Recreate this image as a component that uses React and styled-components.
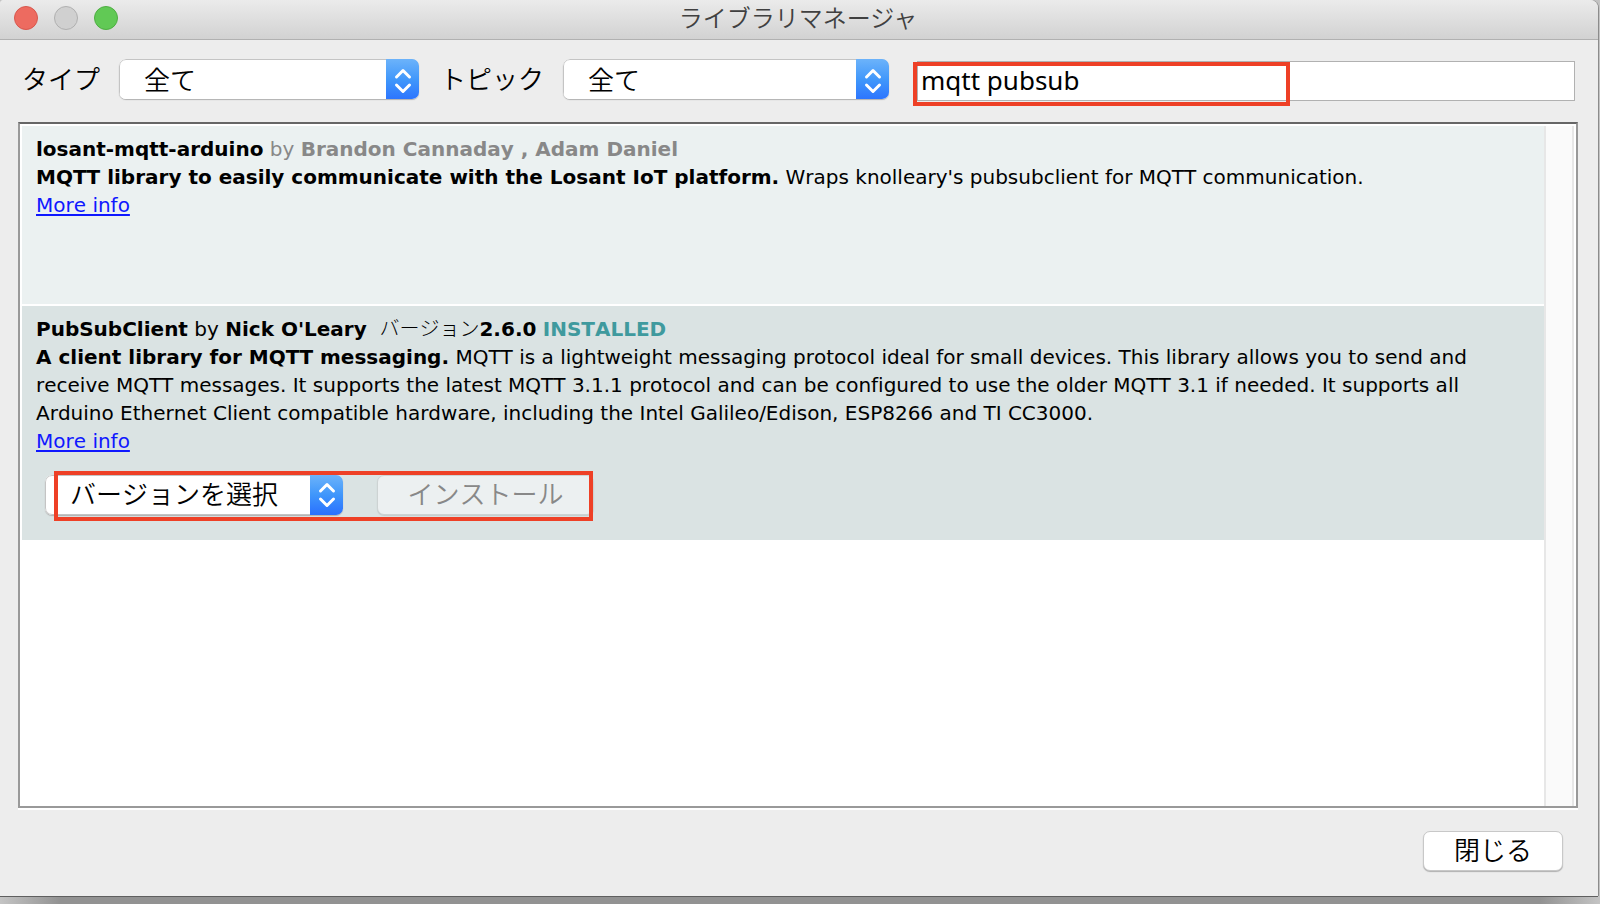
import React from 'react';
import styled, { createGlobalStyle } from 'styled-components';

const GlobalStyle = createGlobalStyle`
  *, *::before, *::after { box-sizing: border-box; }
  body { margin: 0; background: #929292; }
  button, input, select { font: inherit; color: inherit; margin: 0; }
`;

const uiFont = '"Noto Sans", "Noto Sans CJK JP", sans-serif';
const listFont = '"DejaVu Sans", "Noto Sans CJK JP", sans-serif';
const jpFont = '"Noto Sans CJK JP", sans-serif';

const Desktop = styled.div`
  display: flex;
  flex-direction: column;
  min-height: 100vh;
  padding: 0 2px 8px 0;
  background: linear-gradient(to right, #c4c4c4, #929292 60px calc(100% - 60px), #c4c4c4);
`;

const Window = styled.main`
  flex: 1;
  display: flex;
  flex-direction: column;
  background: #ededed;
  border-radius: 4px 8px 0 0;
  box-shadow: 0 1px 0 #5f5f5f, 1px 0 0 #8c8c8c;
  font-family: ${jpFont};
  font-size: 26px;
  font-weight: 350;
  color: #000;
  overflow: hidden;
`;

const TitleBar = styled.header`
  display: grid;
  grid-template-columns: 1fr auto 1fr;
  align-items: center;
  height: 40px;
  padding: 0 16px 0 14px;
  background: linear-gradient(#ebebeb, #d2d2d2);
  border-bottom: 1px solid #b1b1b1;
`;

const Lights = styled.div`
  display: flex;
  gap: 16px;
  padding-bottom: 3px;
`;

const Light = styled.button`
  width: 24px;
  height: 24px;
  padding: 0;
  border: 1px solid ${(p) => p.$edge};
  border-radius: 50%;
  background: ${(p) => p.$fill};
`;

const Title = styled.h1`
  margin: 0;
  padding-bottom: 5px;
  font-size: 24px;
  line-height: 34px;
  font-weight: 350;
  color: #404040;
`;

const Filters = styled.form`
  display: flex;
  align-items: flex-start;
  padding: 19px 23px 21px 22px;
`;

const FilterLabel = styled.label`
  width: ${(p) => p.$width}px;
  line-height: 38px;
`;

const SelectShell = styled.span`
  display: grid;
  grid-template-columns: 1fr 33px;
  width: ${(p) => p.$width}px;
  height: 40px;
  margin-right: ${(p) => p.$after}px;
  border-radius: 7px;
  overflow: hidden;
  background: #fff;
  box-shadow: 0 1px 1px #b0b0b0;
`;

const NativeSelect = styled.select`
  grid-area: 1 / 1 / 2 / 3;
  appearance: none;
  width: 100%;
  padding: 0 33px 4px ${(p) => p.$indent}px;
  border: 1px solid #c4c4c4;
  border-radius: 7px;
  background: #fff;
  outline: none;
`;

const Cap = styled.span`
  grid-area: 1 / 2 / 2 / 3;
  display: grid;
  place-items: center;
  background: linear-gradient(#6cb3fa, #3f96fb 50%, #2a70ff);
  pointer-events: none;
`;

const SearchWrap = styled.div`
  position: relative;
  flex: 1;
  display: flex;
  padding-top: 2px;
`;

const SearchField = styled.input`
  width: 100%;
  height: 40px;
  padding: 0 3px 2px;
  border: 1px solid #b1b1b1;
  border-radius: 0;
  background: #fff;
  outline: none;
  font-family: ${uiFont};
  font-weight: 400;
`;

const SearchMark = styled.span`
  position: absolute;
  top: 3px;
  left: -4px;
  width: 377px;
  height: 44px;
  border: 4px solid #ee4026;
  pointer-events: none;
`;

const Panel = styled.section`
  flex: 1;
  display: flex;
  margin: 0 20px 0 18px;
  padding: 2px 2px 0;
  border: 2px solid #999;
  border-top-color: #666;
  background: #fff;
  box-shadow: 0 2px 0 #fff;
`;

const List = styled.ul`
  flex: 1;
  display: flex;
  flex-direction: column;
  gap: 2px;
  margin: 0;
  padding: 0;
  list-style: none;
  font-family: ${listFont};
  font-size: 20px;
  line-height: 28px;
  font-weight: 400;
  font-kerning: none;
  font-variant-ligatures: none;
`;

const Item = styled.li`
  min-height: 178px;
  padding: 9px 60px 25px 14px;
  background: ${(p) => (p.$selected ? '#dae3e3' : '#ebf1f1')};
`;

const Line = styled.p`
  height: 28px;
  margin: 0;
  white-space: nowrap;
`;

const Muted = styled.span`
  color: #888;
`;

const Japanese = styled.span`
  font-family: ${jpFont};
  font-weight: 300;
  line-height: 20px;
`;

const Installed = styled.b`
  color: #3f9a9e;
`;

const MoreLink = styled.a`
  color: #0f18ff;
  text-decoration: underline 2px;
  text-underline-offset: 2px;
`;

const Actions = styled.div`
  position: relative;
  display: flex;
  width: max-content;
  margin: 20px 0 0 9px;
  font-family: ${jpFont};
  font-size: 26px;
  font-weight: 350;
`;

const ActionsMark = styled.span`
  position: absolute;
  inset: -4px 1px -6px 9px;
  border: 4px solid #ee4026;
  pointer-events: none;
`;

const PushButton = styled.button`
  width: ${(p) => p.$width}px;
  height: 40px;
  padding: 0 0 4px;
  border: 1px solid #c8c8c8;
  border-radius: 7px;
  background: #fff;
  line-height: 34px;
  box-shadow: 0 1px 1px #b0b0b0;

  &:disabled {
    color: #888;
    background: #ecf0f1;
    border-color: #cdd3d3;
    box-shadow: 0 1px 1px #c4cccc;
  }
`;

const ScrollTrack = styled.div`
  width: 30px;
  border: solid #e7e7e7;
  border-width: 0 2px;
  background: #fafafa;
`;

const Footer = styled.footer`
  display: flex;
  justify-content: flex-end;
  padding: 23px 35px 25px;
`;

function Picker({ id, width, indent, after, label, children }) {
  return (
    <SelectShell $width={width} $after={after}>
      <NativeSelect id={id} $indent={indent} aria-label={label}>
        <option>{children}</option>
      </NativeSelect>
      <Cap>
        <svg width="18" height="26" viewBox="0 0 18 26" fill="none" stroke="#fff" strokeWidth="3" strokeLinecap="round" strokeLinejoin="round">
          <path d="M2.500 9 9 2.500 15.500 9M2.500 17 9 23.500 15.500 17" />
        </svg>
      </Cap>
    </SelectShell>
  );
}

export default function App() {
  return (
    <Desktop>
      <GlobalStyle />
      <Window>
        <TitleBar>
          <Lights>
            <Light $fill="#ed6b60" $edge="#d8574d" aria-label="閉じる" />
            <Light $fill="#d0d0d0" $edge="#b0b0b0" aria-label="しまう" />
            <Light $fill="#61c955" $edge="#4eae42" aria-label="拡大" />
          </Lights>
          <Title>ライブラリマネージャ</Title>
        </TitleBar>
        <Filters onSubmit={(e) => e.preventDefault()}>
          <FilterLabel htmlFor="type" $width={97}>タイプ</FilterLabel>
          <Picker id="type" width={300} indent={24} after={21}>全て</Picker>
          <FilterLabel htmlFor="topic" $width={123}>トピック</FilterLabel>
          <Picker id="topic" width={326} indent={24} after={28}>全て</Picker>
          <SearchWrap>
            <SearchField type="text" defaultValue="mqtt pubsub" aria-label="検索" />
            <SearchMark />
          </SearchWrap>
        </Filters>
        <Panel>
          <List>
            <Item>
              <Line><b>losant-mqtt-arduino</b> <Muted>by <b>Brandon Cannaday , Adam Daniel</b></Muted></Line>
              <Line><b>MQTT library to easily communicate with the Losant IoT platform.</b> Wraps knolleary's pubsubclient for MQTT communication.</Line>
              <Line><MoreLink href="#losant">More info</MoreLink></Line>
            </Item>
            <Item $selected>
              <Line><b>PubSubClient</b> by <b>Nick O'Leary</b>&nbsp; <Japanese>バージョン</Japanese><b>2.6.0</b> <Installed>INSTALLED</Installed></Line>
              <Line><b>A client library for MQTT messaging.</b> MQTT is a lightweight messaging protocol ideal for small devices. This library allows you to send and</Line>
              <Line>receive MQTT messages. It supports the latest MQTT 3.1.1 protocol and can be configured to use the older MQTT 3.1 if needed. It supports all</Line>
              <Line>Arduino Ethernet Client compatible hardware, including the Intel Galileo/Edison, ESP8266 and TI CC3000.</Line>
              <Line><MoreLink href="#pubsubclient">More info</MoreLink></Line>
              <Actions>
                <Picker label="バージョンを選択" width={298} indent={24} after={34}>バージョンを選択</Picker>
                <PushButton type="button" disabled $width={217}>インストール</PushButton>
                <ActionsMark />
              </Actions>
            </Item>
          </List>
          <ScrollTrack />
        </Panel>
        <Footer>
          <PushButton type="button" $width={140}>閉じる</PushButton>
        </Footer>
      </Window>
    </Desktop>
  );
}
